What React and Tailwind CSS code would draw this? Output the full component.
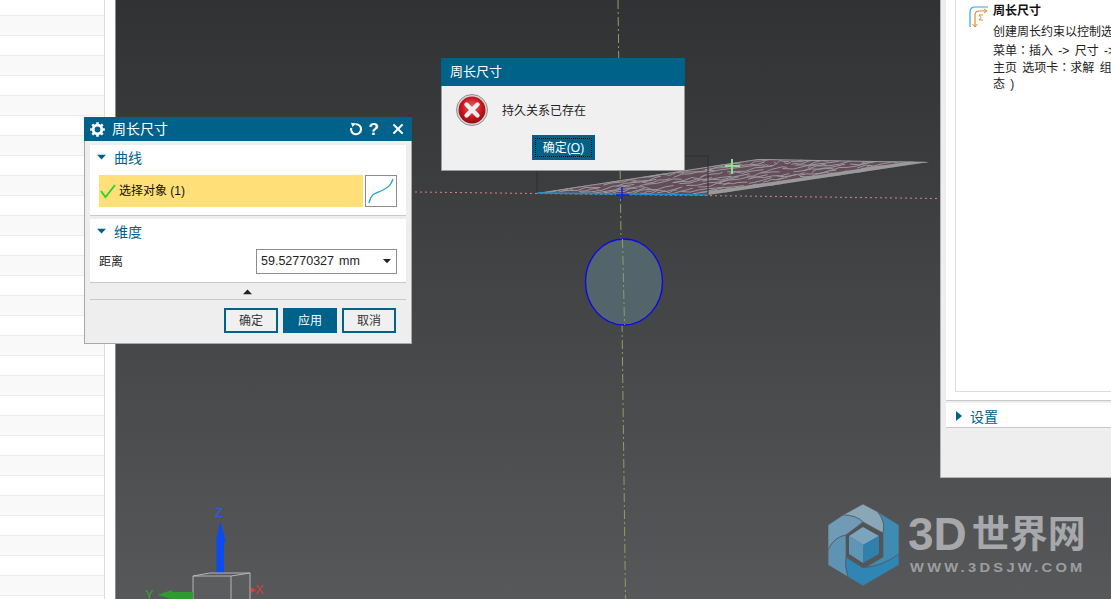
import { X } from 'lucide-react';

const font = { fontFamily: '"Liberation Sans", "Noto Sans CJK SC", sans-serif' };

const rnd = (i) => {
  const s = Math.sin(i * 127.1) * 43758.5453;
  return s - Math.floor(s);
};

// point on the terrain parallelogram: u along the short edge, v along the long edge
function surf(u, v) {
  return [537 + 171 * u + 221 * v, 193 + 2 * u - 34 * v];
}

function terrainLines() {
  const lines = [];
  let seed = 1;
  for (let r = 0; r < 19; r++) {
    const u = r / 18;
    let v = rnd(seed++) * 0.08;
    while (v < 1) {
      const len = 0.06 + rnd(seed++) * 0.2;
      const pts = [];
      for (let k = 0; k <= 5; k++) {
        const [x, y] = surf(u, Math.min(v + (len * k) / 5, 1));
        pts.push(`${x.toFixed(1)},${(y + (rnd(seed++) - 0.5) * 3).toFixed(1)}`);
      }
      lines.push(pts.join(' '));
      v += len + 0.03 + rnd(seed++) * 0.14;
    }
  }
  return lines;
}

function Scene() {
  return (
    <svg className="absolute left-0 top-0" width="1111" height="599" viewBox="0 0 1111 599">
      <defs>
        <clipPath id="terrain">
          <polygon points="537,193 758,159 929,162 708,195" />
        </clipPath>
      </defs>
      <line x1="618" y1="0" x2="625.5" y2="599" stroke="#8f9f62" strokeWidth="1" strokeDasharray="9 3 2 3" />
      <line x1="415" y1="192" x2="940" y2="198.5" stroke="#d98484" strokeWidth="1" strokeDasharray="2 3" />
      <polygon points="537,193 758,159 929,162 708,195" fill="#644c5a" />
      <g clipPath="url(#terrain)" fill="none" stroke="#9a9a9a" strokeWidth="1">
        {terrainLines().map((p, i) => (
          <polyline key={i} points={p} />
        ))}
        <path d="M708 194L929 161" strokeWidth="5" />
        <path d="M537 193L758 159L929 162" strokeWidth="2" />
      </g>
      <path d="M537 193V156H708V195" fill="none" stroke="#2e2f30" strokeWidth="1" />
      <line x1="537" y1="193" x2="708" y2="195" stroke="#1a90d4" strokeWidth="1.5" />
      <path d="M622 187V201M616 195H629" stroke="#0a20f0" strokeWidth="1.5" />
      <path d="M732 159V174M725 166H740" stroke="#92dc92" strokeWidth="2" />
      <ellipse cx="624" cy="282" rx="38.5" ry="43" fill="#54646b" stroke="#0808f0" strokeWidth="1.3" />
      <line x1="622.5" y1="239" x2="624.5" y2="325" stroke="#8f9f62" strokeWidth="1" strokeDasharray="9 3 2 3" />
      {/* triad */}
      <path d="M216.5 574V542H216L220 522L224 542V574Z" fill="#0a4cf0" />
      <path d="M216 542H226L220.5 522Z" fill="#0a4cf0" />
      <path d="M193 599V576L210 573L250 573V599M193 576H231L250 573M231 576V599" fill="#5b5c5e" stroke="#b5b5b5" strokeWidth="1" />
      <path d="M193 592H172L172 590L157 595L172 599H193Z" fill="#2f9a2f" />
      <path d="M251 587L256 590.5L251 593Z" fill="#e03a3a" />
    </svg>
  );
}

function Logo() {
  return (
    <div className="absolute left-[828px] top-[504px] flex items-start gap-[8px]" style={font}>
      <svg width="72" height="82" viewBox="0 0 72 82">
        <g stroke="#57595c" strokeWidth="0.7">
          <path d="M15 11L35 0L50 8Q58 18 55 29L35 18Q28 11 15 11Z" fill="#8aa7b8" />
          <path d="M50 8L71 21V50Q55 62 38 63L55 53V29Q58 18 50 8Z" fill="#3f8cb2" />
          <path d="M18 53L35 64Q55 62 71 50V61L35 82L20 73Q16 62 18 53Z" fill="#2f86b4" />
          <path d="M15 11L0 21V46Q6 33 18 31L35 18Q28 11 15 11Z" fill="#6f9bb6" />
          <path d="M0 46Q6 33 18 31V53Q16 62 20 73L0 61Z" fill="#5f93b3" />
        </g>
        <polygon points="35,23 51,32 35,41 21,32" fill="#7ba5bf" />
        <polygon points="21,32 35,41 35,59 21,50" fill="#5f96b6" />
        <polygon points="51,32 35,41 35,59 51,50" fill="#2f80ab" />
      </svg>
      <div className="flex flex-col pt-[7px]">
        <div className="flex items-center h-[46px] leading-none font-bold text-[#a6a8ab]">
          <span className="text-[46px]">3D</span>
          <span className="text-[38px] ml-[5px]">世界网</span>
        </div>
        <span className="mt-[4px] ml-[2px] text-[13px] leading-[14px] font-bold tracking-[2.9px] text-[#9c9ea1] whitespace-nowrap origin-left scale-x-[1.13]">
          WWW.3DSJW.COM
        </span>
      </div>
    </div>
  );
}

function Caret({ className }) {
  return (
    <svg width="11" height="7" viewBox="0 0 11 7" className={className}>
      <path d="M0 0H11L5.5 6Z" fill="currentColor" />
    </svg>
  );
}

function SectionHead({ label }) {
  return (
    <div className="flex items-center h-[25px] pl-[7px] text-[#006289]">
      <Caret className="mr-[8px] w-[9px]" />
      <span className="text-[14px] leading-[20px]">{label}</span>
    </div>
  );
}

function DialogButton({ label, primary }) {
  return (
    <button
      className={`w-[54px] h-[25px] text-[12px] border-2 border-[#006289] ${
        primary ? 'bg-[#006289] text-white' : 'bg-[#f0f0f0] text-[#333]'
      }`}
    >
      {label}
    </button>
  );
}

function GearIcon() {
  const teeth = [0, 45, 90, 135];
  return (
    <svg width="15" height="15" viewBox="0 0 15 15">
      <circle cx="7.5" cy="7.5" r="4.3" fill="none" stroke="white" strokeWidth="2.8" />
      {teeth.map((a) => (
        <line key={a} x1="7.5" y1="0.2" x2="7.5" y2="14.8" stroke="white" strokeWidth="2.6" transform={`rotate(${a} 7.5 7.5)`} strokeDasharray="3 8.6 3" />
      ))}
    </svg>
  );
}

function ResetIcon() {
  return (
    <svg width="14" height="14" viewBox="0 0 14 14" fill="none">
      <path d="M6.5 2.3A5 5 0 1 1 2.2 6" stroke="white" strokeWidth="2.1" />
      <path d="M2 0.8L7 1.6L3.4 5Z" fill="white" />
    </svg>
  );
}

function MainDialog() {
  return (
    <div className="absolute left-[84px] top-[117px] w-[328px] h-[227px] bg-[#eeeeee] border border-[#a8a8a8] border-t-0 flex flex-col" style={font}>
      <div className="h-[24px] bg-[#006289] flex items-center text-white pl-[6px] pr-[6px] shrink-0 -mx-px">
        <GearIcon />
        <span className="ml-[7px] text-[14px] leading-[20px] flex-1">周长尺寸</span>
        <ResetIcon />
        <span className="font-bold text-[17px] leading-none ml-[6px] mr-[11px]">?</span>
        <X size={16} strokeWidth={3} />
      </div>
      <div className="mx-[5px] mt-[4px] h-[71px] bg-white border-b border-[#c8c8c8] shrink-0">
        <SectionHead label="曲线" />
        <div className="flex h-[32px] mt-[5px] ml-[9px] mr-[9px] gap-[2px]">
          <div className="flex-1 bg-[#ffdf77] flex items-center text-[12px] text-[#111]">
            <svg width="16" height="16" viewBox="0 0 16 16" className="ml-[1px] mr-[3px]">
              <path d="M1 8L5.5 14L15 2" fill="none" stroke="#35cf35" strokeWidth="2" />
            </svg>
            <span className="whitespace-nowrap">选择对象 (1)</span>
          </div>
          <div className="w-[32px] border border-[#8c8c8c] bg-white">
            <svg width="30" height="30" viewBox="0 0 30 30">
              <path d="M3 27C5 16 12 17 17 14C23 11 25 9 27 3" fill="none" stroke="#22a5cc" strokeWidth="1.3" />
            </svg>
          </div>
        </div>
      </div>
      <div className="mx-[5px] mt-[3px] h-[64px] bg-white border-b border-[#c8c8c8] shrink-0">
        <SectionHead label="维度" />
        <div className="flex items-center justify-between h-[25px] mt-[5px] ml-[9px] mr-[9px]">
          <span className="text-[12px] text-[#222]">距离</span>
          <div className="w-[141px] h-full border border-[#8c8c8c] flex items-center pl-[4px] pr-[5px] text-[12.5px] text-[#222]">
            <span className="flex-1 whitespace-nowrap">59.52770327<span className="ml-[5px]">mm</span></span>
            <Caret className="w-[8px]" />
          </div>
        </div>
      </div>
      <div className="mx-[5px] h-[17px] border-b border-[#c8c8c8] flex justify-center items-center shrink-0 text-[#222] pr-[1px]">
        <Caret className="rotate-180 w-[9px]" />
      </div>
      <div className="flex justify-end gap-[5px] mt-[8px] mr-[15px]">
        <DialogButton label="确定" />
        <DialogButton label="应用" primary />
        <DialogButton label="取消" />
      </div>
    </div>
  );
}

function ErrorIcon() {
  return (
    <svg width="32" height="32" viewBox="0 0 32 32">
      <defs>
        <radialGradient id="err" cx="50%" cy="40%" r="62%">
          <stop offset="0%" stopColor="#e9686a" />
          <stop offset="60%" stopColor="#c7161e" />
          <stop offset="100%" stopColor="#8e0d12" />
        </radialGradient>
      </defs>
      <circle cx="16" cy="16" r="15.5" fill="#d9d9d9" stroke="#8f8f8f" />
      <circle cx="16" cy="16" r="13.5" fill="url(#err)" />
      <path d="M10.5 10.5L21.5 21.5M21.5 10.5L10.5 21.5" stroke="#f2eeee" strokeWidth="4.4" strokeLinecap="round" />
    </svg>
  );
}

function ErrorDialog() {
  return (
    <div className="absolute left-[441px] top-[58px] w-[244px] h-[113px] bg-[#f0f0f0] border-x border-b border-[#9a9a9a] flex flex-col" style={font}>
      <div className="h-[28px] -mx-px bg-[#006289] text-white text-[13px] flex items-center pl-[9px] shrink-0">周长尺寸</div>
      <div className="flex items-center pl-[14px] mt-[8px] h-[32px]">
        <ErrorIcon />
        <span className="ml-[14px] mt-[2px] text-[12px] text-[#222]">持久关系已存在</span>
      </div>
      <div className="flex justify-center mt-[9px] pl-[1px]">
        <div className="w-[63px] h-[25px] bg-[#006289] p-[3px]">
          <div className="h-full border border-dotted border-black flex items-center justify-center text-white text-[12px]">
            确定(<span className="underline">O</span>)
          </div>
        </div>
      </div>
    </div>
  );
}

function HelpPanel() {
  const tc = { fontFamily: '"Noto Sans CJK TC", sans-serif' };
  return (
    <div className="absolute left-[940px] top-0 w-[171px] h-[478px] bg-[#eeeeee] border-l border-b border-[#b4b4b4] pl-[5px] flex flex-col" style={font}>
      <div className="h-[401px] bg-white border-b border-[#c8c8c8] pl-[9px] pb-[8px] shrink-0">
        <div className="h-full border-l border-b border-[#dcdcdc] flex pl-[13px] pt-[3px] overflow-hidden">
          <svg width="20" height="22" viewBox="0 0 20 22" className="mt-[3px] shrink-0">
            <path d="M1 21V6Q1 1 6 1H19" fill="none" stroke="#2ba7d6" strokeWidth="1.2" />
            <path d="M6 21V9Q6 5 10 5H17" fill="none" stroke="#e08a2e" strokeWidth="1.2" />
            <path d="M3.5 18L6 21L8.5 18M15 3L18 5L15 7" fill="none" stroke="#e08a2e" strokeWidth="1" />
            <path d="M10 9H14M10 9L12 11.5L10 14H14" fill="none" stroke="#e08a2e" strokeWidth="1" />
          </svg>
          <div className="ml-[4px] text-[12px] leading-[17px] text-[#222] whitespace-nowrap [word-spacing:2px]">
            <div className="h-[17px] font-bold text-[#111]">周长尺寸</div>
            <div className="h-[17px] mt-[4px]">创建周长约束以控制选</div>
            <div className="h-[17px]">菜单<span style={tc}>：</span>插入 -&gt; 尺寸 -&gt;</div>
            <div className="h-[17px]">主页 选项卡<span style={tc}>：</span>求解 组</div>
            <div className="h-[17px] mt-[1px]">态 )</div>
          </div>
        </div>
      </div>
      <div className="mt-[2px] h-[25px] bg-white border-b border-[#c8c8c8] flex items-center pl-[10px] text-[#006289]">
        <svg width="6" height="10" viewBox="0 0 6 10" className="mt-[2px]">
          <path d="M0 0L6 5L0 10Z" fill="currentColor" />
        </svg>
        <span className="ml-[8px] mt-[3px] text-[14px] leading-[20px]">设置</span>
      </div>
    </div>
  );
}

export default function App() {
  const rows = Array.from({ length: 30 });

  return (
    <div className="relative flex w-[1111px] h-[599px] overflow-hidden bg-[#56575a]">
      <div className="w-[105px] shrink-0 bg-white border-r border-[#dcdcdc] flex flex-col overflow-hidden pt-[15px]">
        <div className="shrink-0 h-px bg-[#ececec]" />
        {rows.map((_, i) => (
          <div
            key={i}
            className={`shrink-0 h-[20px] border-b border-[#ececec] ${i % 2 === 0 ? 'bg-[#f9f9f9]' : 'bg-white'}`}
          />
        ))}
      </div>
      <div className="w-[11px] shrink-0 bg-white border-r border-[#8c8c8c]" />
      <div className="flex-1 bg-gradient-to-b from-[#313233] to-[#57585a]" />
      <Scene />
      <Logo />
      <HelpPanel />
      <MainDialog />
      <ErrorDialog />
      <span className="absolute left-[215px] top-[506px] text-[13px] leading-[14px] text-[#2a5fe0]" style={font}>Z</span>
      <span className="absolute left-[145px] top-[588px] text-[13px] leading-[14px] text-[#3aa03a]" style={font}>Y</span>
      <span className="absolute left-[255px] top-[583px] text-[13px] leading-[14px] text-[#d83c3c]" style={font}>X</span>
    </div>
  );
}
